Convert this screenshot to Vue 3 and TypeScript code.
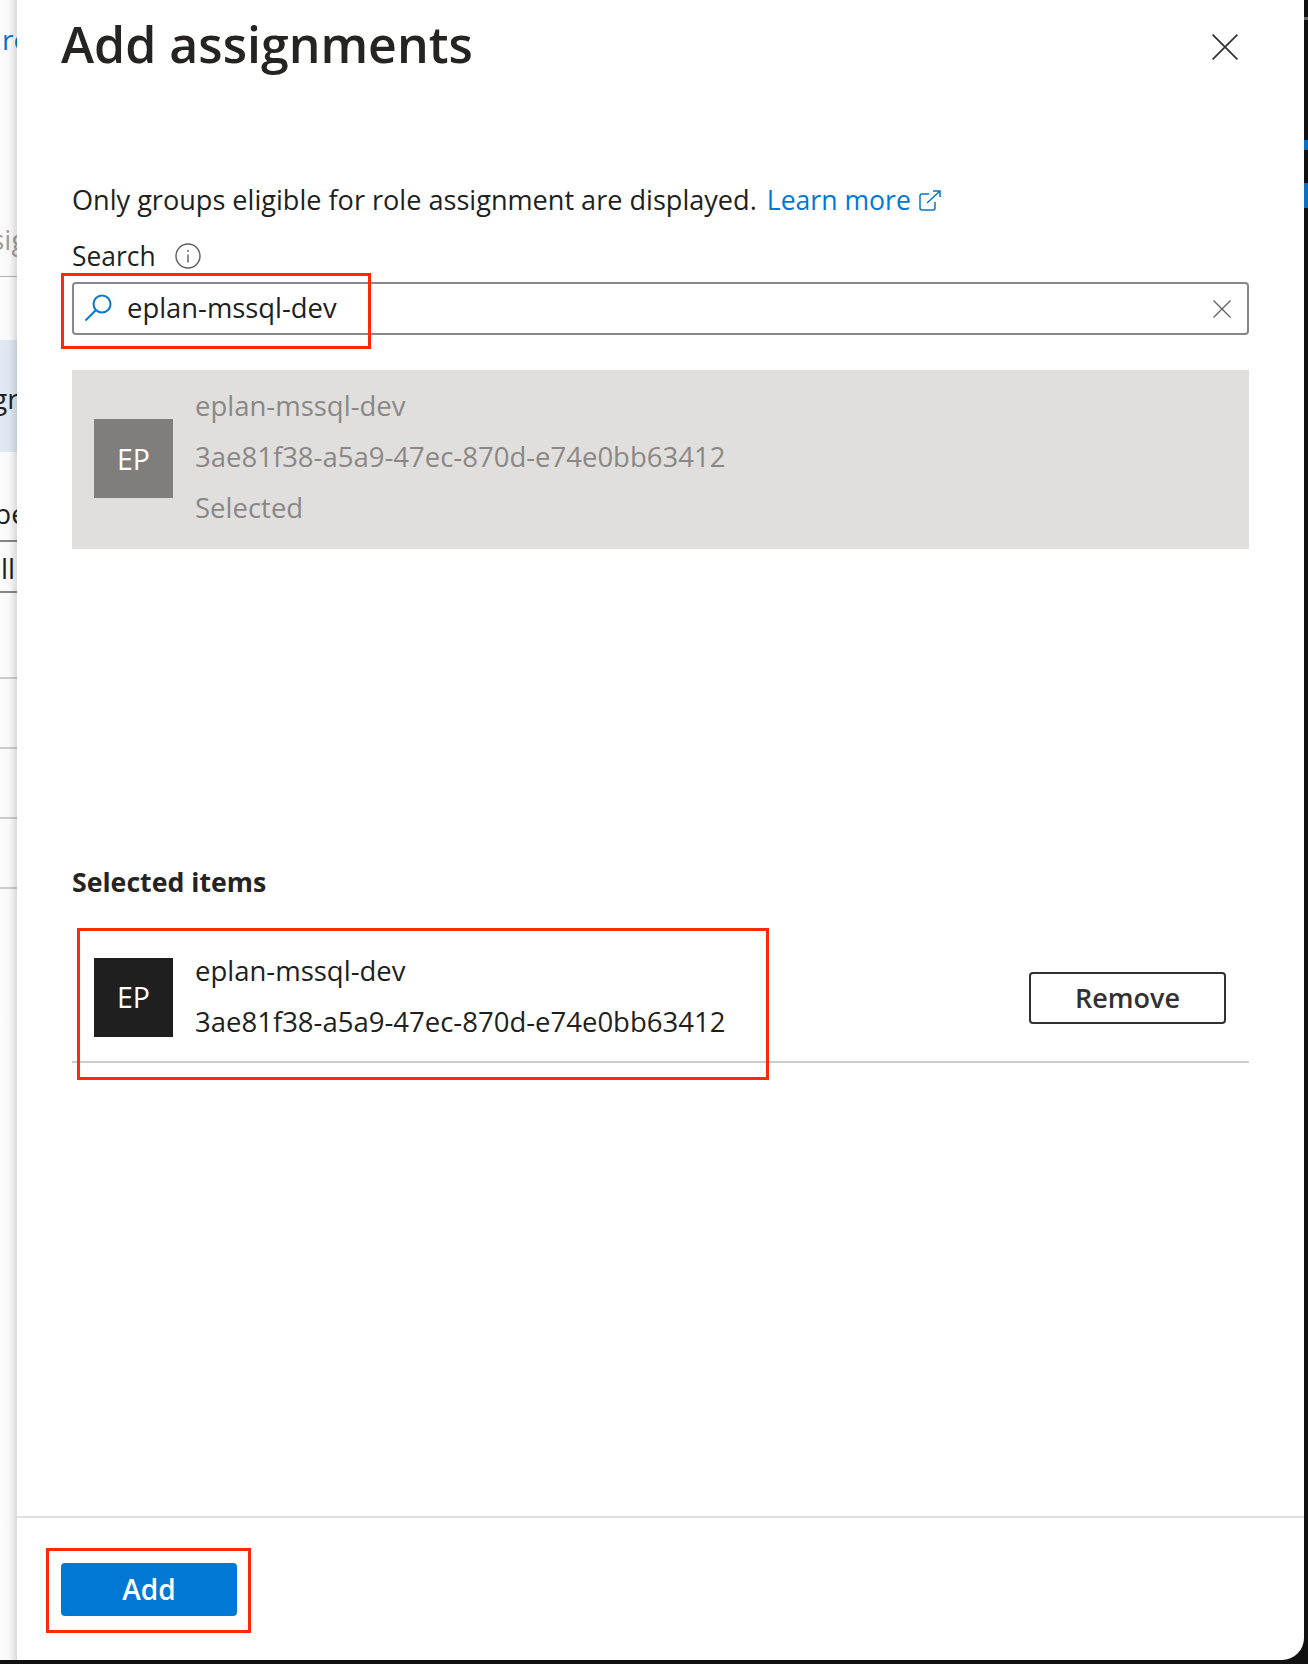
<script setup lang="ts">
const guid: string = '3ae81f38-a5a9-47ec-870d-e74e0bb63412'
const name: string = 'eplan-mssql-dev'
</script>

<template>
  <div class="screen">
    <div class="window">
      <div class="behind">
        <div class="b-top">
          <span class="b-link">ro</span>
          <span class="b-sig">sig</span>
        </div>
        <div class="b-gap"></div>
        <div class="b-active"><span>gr</span></div>
        <div class="b-type"><span>pe</span></div>
        <div class="b-all"><span>ll</span></div>
        <div class="b-row r1"></div>
        <div class="b-row"></div>
        <div class="b-row"></div>
        <div class="b-row"></div>
      </div>
      <div class="panel">
        <div class="body">
          <header class="head">
            <h1>Add assignments</h1>
            <svg class="close" width="26" height="26" viewBox="0 0 26 26">
              <path d="M0.6 0.6 25.4 25.4M25.4 0.6 0.6 25.4" />
            </svg>
          </header>
          <p class="notice">
            <span>Only groups eligible for role assignment are displayed.</span>
            <a class="link">Learn more</a>
            <svg class="ext" width="22" height="21" viewBox="0 0 22 21">
              <path d="M10 4H3a2 2 0 0 0-2 2v12a2 2 0 0 0 2 2h11a2 2 0 0 0 2-2v-6M8 13 21 1M14 1h7v6" />
            </svg>
          </p>
          <div class="label">
            <span>Search</span>
            <svg class="info" width="26" height="26" viewBox="0 0 26 26">
              <circle cx="13" cy="13" r="12" />
              <path d="M13 11.5v8M13 7v2" />
            </svg>
          </div>
          <div class="search">
            <svg class="glass" width="28" height="28" viewBox="0 0 28 28">
              <circle cx="18" cy="10" r="8.5" />
              <path d="M12 16 1.5 26.5" />
            </svg>
            <span class="query">{{ name }}</span>
            <svg class="clear" width="18" height="18" viewBox="0 0 18 18">
              <path d="M.5.5l17 17M17.5.5l-17 17" />
            </svg>
          </div>
          <div class="result">
            <div class="avatar muted">EP</div>
            <div class="lines">
              <div>{{ name }}</div>
              <div>{{ guid }}</div>
              <div>Selected</div>
            </div>
          </div>
          <h2 class="sel-title">Selected items</h2>
          <div class="sel-row">
            <div class="avatar dark">EP</div>
            <div class="lines">
              <div>{{ name }}</div>
              <div>{{ guid }}</div>
            </div>
            <button class="remove">Remove</button>
          </div>
        </div>
        <footer class="foot">
          <button class="add">Add</button>
        </footer>
      </div>
    </div>
    <div class="gutter">
      <i class="g1"></i>
      <i class="g2"></i>
      <i class="g3"></i>
    </div>
    <div class="mark m1"></div>
    <div class="mark m2"></div>
    <div class="mark m3"></div>
  </div>
</template>

<style scoped>
.screen {
  position: relative;
  display: flex;
  align-items: flex-start;
  width: 1308px;
  height: 1664px;
  background: #111;
  overflow: hidden;
  font-family: "Open Sans", "Noto Sans", sans-serif;
  color: #201f1e;
}
.window {
  display: flex;
  width: 1304px;
  height: 1660px;
  background: #fff;
  border-bottom-right-radius: 22px;
  overflow: hidden;
}
.behind {
  position: relative;
  flex: 0 0 17px;
  width: 17px;
  overflow: hidden;
  font-size: 28px;
  line-height: 36px;
  white-space: nowrap;
  background: #fff;
}
.behind::after {
  content: "";
  position: absolute;
  top: 0;
  right: 0;
  bottom: 0;
  width: 17px;
  background: linear-gradient(to right, rgba(0, 0, 0, 0.01), rgba(0, 0, 0, 0.03) 55%, rgba(0, 0, 0, 0.14));
}
.b-top {
  display: flex;
  flex-direction: column;
  height: 277px;
  padding-top: 21px;
  box-sizing: border-box;
  border-bottom: 1px solid #b5b5b5;
}
.b-link {
  color: #0078d4;
  margin-left: 2px;
}
.b-sig {
  margin: 164px 0 0 -9px;
  color: #a19f9d;
}
.b-gap {
  height: 63px;
}
.b-active {
  height: 112px;
  padding-top: 40px;
  box-sizing: border-box;
  background: #e4ecf8;
}
.b-active span {
  display: block;
  margin-left: -8px;
}
.b-type {
  height: 90px;
  padding-top: 43px;
  box-sizing: border-box;
  border-bottom: 2px solid #8a8886;
}
.b-type span {
  margin-left: -6px;
  display: block;
}
.b-all {
  height: 51px;
  padding-top: 8px;
  box-sizing: border-box;
  border-bottom: 2px solid #8a8886;
}
.b-all span {
  margin-left: 1px;
  display: block;
}
.b-row {
  height: 70px;
  box-sizing: border-box;
  border-bottom: 2px solid #d2d0ce;
}
.b-row.r1 {
  height: 86px;
}
.panel {
  flex: 1;
  display: flex;
  flex-direction: column;
  min-width: 0;
}
.body {
  flex: 1;
  padding: 0 55px;
}
.head {
  display: flex;
  align-items: flex-start;
  justify-content: space-between;
  height: 182px;
  margin-left: -11px;
}
h1 {
  margin: 10px 0 0;
  font-size: 50px;
  line-height: 68px;
  font-weight: 600;
  color: #252423;
}
.close {
  margin: 34px 11px 0 0;
  fill: none;
  stroke: #323130;
  stroke-width: 1.7;
}
.notice {
  display: flex;
  align-items: center;
  height: 36px;
  margin: 0;
  font-size: 27.1px;
  line-height: 36px;
  white-space: nowrap;
}
.link {
  color: #0078d4;
  margin-left: 10px;
  font-size: 26.6px;
}
.ext {
  margin-left: 8px;
  fill: none;
  stroke: #0078d4;
  stroke-width: 1.5;
}
.label {
  display: flex;
  align-items: center;
  gap: 19px;
  height: 36px;
  margin-top: 20px;
  font-size: 26.4px;
  line-height: 36px;
}
.info {
  fill: none;
  stroke: #605e5c;
  stroke-width: 1.4;
}
.search {
  display: flex;
  align-items: center;
  height: 53px;
  margin-top: 8px;
  padding: 0 16px 0 10px;
  box-sizing: border-box;
  border: 2px solid #8a8886;
  border-radius: 4px;
  font-size: 27.4px;
}
.glass {
  flex: none;
  margin-top: -2px;
  fill: none;
  stroke: #0078d4;
  stroke-width: 2;
}
.query {
  flex: 1;
  margin-left: 15px;
  margin-top: -2px;
}
.clear {
  fill: none;
  stroke: #605e5c;
  stroke-width: 1.2;
}
.result {
  display: flex;
  align-items: center;
  height: 179px;
  margin-top: 35px;
  padding-left: 22px;
  background: #e1dfdd;
  color: #8a8886;
}
.avatar {
  flex: none;
  display: flex;
  align-items: center;
  justify-content: center;
  width: 79px;
  height: 79px;
  color: #fff;
  font-size: 28.5px;
}
.avatar.muted {
  background: #7f7e7c;
  margin-top: -2px;
}
.avatar.dark {
  background: #1f1f1f;
  margin-top: 1px;
}
.lines {
  margin-left: 22px;
  font-size: 27.5px;
  line-height: 51px;
}
.result .lines {
  margin-top: -6px;
}
.sel-row .lines {
  margin-top: -2px;
}
.sel-title {
  margin: 315px 0 0;
  font-size: 26.7px;
  line-height: 36px;
  font-weight: 700;
  color: #252423;
}
.sel-row {
  display: flex;
  align-items: center;
  height: 131px;
  margin-top: 32px;
  padding: 0 23px 0 22px;
  box-sizing: border-box;
  border-bottom: 2px solid #cccccc;
}
.remove {
  width: 197px;
  height: 52px;
  margin: 2px 0 0 auto;
  padding: 0;
  background: #fff;
  border: 2px solid #323130;
  border-radius: 4px;
  color: #323130;
  font: 600 27px "Open Sans", sans-serif;
}
.foot {
  flex: none;
  height: 144px;
  padding: 45px 0 0 44px;
  box-sizing: border-box;
  border-top: 2px solid #dfdfdf;
}
.add {
  display: block;
  width: 176px;
  height: 53px;
  padding: 0 0 2px;
  background: #0078d4;
  border: 0;
  border-radius: 4px;
  color: #fff;
  font: 600 28px "Open Sans", sans-serif;
}
.gutter {
  flex: 0 0 4px;
  display: flex;
  flex-direction: column;
}
.gutter i {
  display: block;
  width: 4px;
}
.g1 {
  height: 3px;
  margin-top: 17px;
  background: #6b6b6b;
}
.g2 {
  height: 10px;
  margin-top: 120px;
  background: #106ebe;
}
.g3 {
  height: 25px;
  margin-top: 33px;
  background: #106ebe;
}
.mark {
  position: absolute;
  box-sizing: border-box;
  border: 3px solid #ff2a00;
}
.m1 {
  left: 61px;
  top: 273px;
  width: 310px;
  height: 76px;
}
.m2 {
  left: 77px;
  top: 928px;
  width: 692px;
  height: 152px;
}
.m3 {
  left: 46px;
  top: 1548px;
  width: 205px;
  height: 85px;
}
</style>
